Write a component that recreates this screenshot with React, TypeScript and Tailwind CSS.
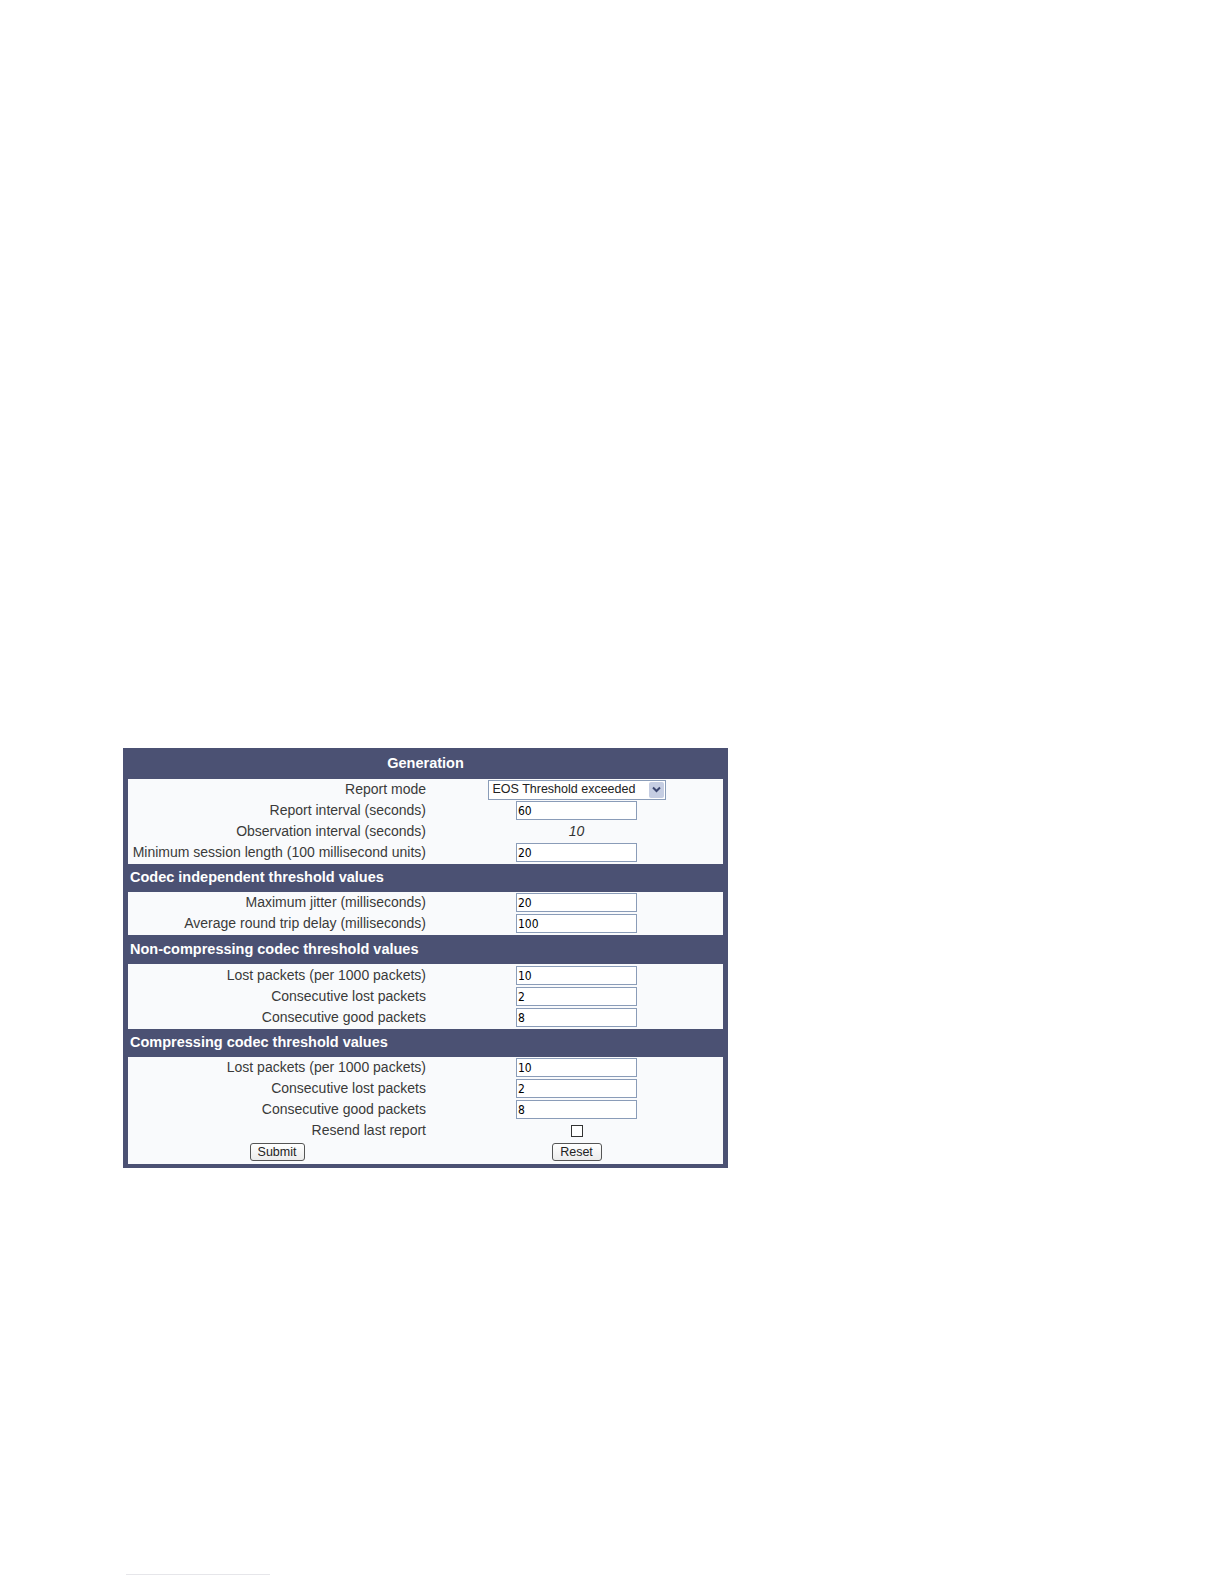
import React from 'react'

type Row =
  | { label: string; kind: 'input'; value: string }
  | { label: string; kind: 'select'; value: string }
  | { label: string; kind: 'text'; value: string }
  | { label: string; kind: 'check' }

interface Section {
  title: string
  head: string
  body: string
  rows: Row[]
}

const sections: Section[] = [
  {
    title: 'Generation',
    head: 'h-[31px] justify-center',
    body: 'pt-[0px] pb-[1px]',
    rows: [
      { label: 'Report mode', kind: 'select', value: 'EOS Threshold exceeded' },
      { label: 'Report interval (seconds)', kind: 'input', value: '60' },
      { label: 'Observation interval (seconds)', kind: 'text', value: '10' },
      { label: 'Minimum session length (100 millisecond units)', kind: 'input', value: '20' },
    ],
  },
  {
    title: 'Codec independent threshold values',
    head: 'h-[28px] pl-[2px]',
    body: 'pt-[0px] pb-[1px]',
    rows: [
      { label: 'Maximum jitter (milliseconds)', kind: 'input', value: '20' },
      { label: 'Average round trip delay (milliseconds)', kind: 'input', value: '100' },
    ],
  },
  {
    title: 'Non-compressing codec threshold values',
    head: 'h-[29px] pl-[2px]',
    body: 'pt-[1px] pb-[1px]',
    rows: [
      { label: 'Lost packets (per 1000 packets)', kind: 'input', value: '10' },
      { label: 'Consecutive lost packets', kind: 'input', value: '2' },
      { label: 'Consecutive good packets', kind: 'input', value: '8' },
    ],
  },
  {
    title: 'Compressing codec threshold values',
    head: 'h-[28px] pl-[2px]',
    body: 'pt-[0px] pb-[1px]',
    rows: [
      { label: 'Lost packets (per 1000 packets)', kind: 'input', value: '10' },
      { label: 'Consecutive lost packets', kind: 'input', value: '2' },
      { label: 'Consecutive good packets', kind: 'input', value: '8' },
      { label: 'Resend last report', kind: 'check' },
    ],
  },
]

function Field({ row }: { row: Row }) {
  if (row.kind === 'input') {
    return (
      <div className="w-[121px] h-[19px] border border-[#8a9cb8] bg-white flex items-center pl-[1px] text-[12px] leading-none text-black font-['DejaVu_Sans_Condensed','DejaVu_Sans',sans-serif]">
        {row.value}
      </div>
    )
  }
  if (row.kind === 'select') {
    return (
      <div className="w-[178px] h-[20px] border border-[#8a9cb8] bg-white flex items-center justify-between pl-[4px] pr-[1px] text-[12.5px] leading-none text-[#222]">
        <span>{row.value}</span>
        <span className="w-[15px] h-[16px] bg-[#c5cde2] rounded-[2px] flex items-center justify-center">
          <svg width="9" height="7" viewBox="0 0 9 7">
            <path d="M1 1.5 L4.5 5 L8 1.5" stroke="#3b4670" strokeWidth="2" fill="none" />
          </svg>
        </span>
      </div>
    )
  }
  if (row.kind === 'text') {
    return <span className="italic text-[14px] text-[#333]">{row.value}</span>
  }
  return <div className="w-[12px] h-[12px] border border-[#333] bg-white" />
}

function Btn({ label, w }: { label: string; w: string }) {
  return (
    <div
      className={`${w} h-[18px] border border-[#555] rounded-[3px] bg-gradient-to-b from-white to-[#ececec] flex items-center justify-center text-[12.5px] leading-none text-[#222]`}
    >
      {label}
    </div>
  )
}

export default function App() {
  return (
    <div className="bg-white font-['Liberation_Sans',Arial,sans-serif]">
      <div className="pt-[748px] pl-[123px]">
        <div className="w-[605px] bg-[#4b5173] px-[5px] pb-[4px]">
          {sections.map((s) => (
            <div key={s.title}>
              <div className={`${s.head} flex items-center text-white font-bold text-[14.5px]`}>
                {s.title}
              </div>
              <div className={`${s.body} bg-[#f9fafc] text-[14px] text-[#3a3a3a]`}>
                {s.rows.map((r) => (
                  <div key={r.label} className="h-[21px] flex items-center">
                    <div className="w-[298px] text-right">{r.label}</div>
                    <div className="flex-1 flex justify-center pl-[4px]">
                      <Field row={r} />
                    </div>
                  </div>
                ))}
                {s.title.startsWith('Compressing') && (
                  <div className="h-[22px] flex items-center">
                    <div className="w-[298px] flex justify-center">
                      <Btn label="Submit" w="w-[55px]" />
                    </div>
                    <div className="flex-1 flex justify-center pl-[4px]">
                      <Btn label="Reset" w="w-[50px]" />
                    </div>
                  </div>
                )}
              </div>
            </div>
          ))}
        </div>
        <div className="mt-[406px] ml-[3px] w-[144px] h-[1px] bg-[#e6e6ea]" />
      </div>
    </div>
  )
}
